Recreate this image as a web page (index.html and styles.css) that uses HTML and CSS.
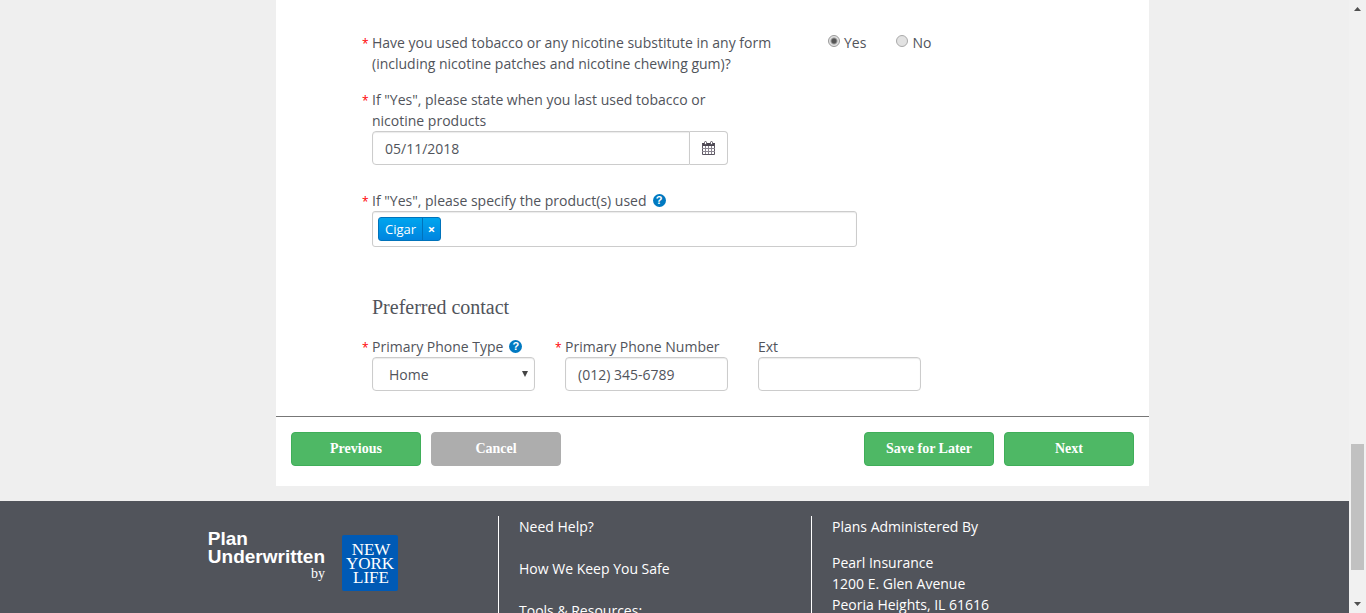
FILE: index.html
```html
<!DOCTYPE html>
<html lang="en">
<head>
<meta charset="utf-8">
<title>Application</title>
<link rel="stylesheet" href="styles.css">
</head>
<body>
<div class="viewport">
  <div class="page">
    <div class="columns">
      <main class="panel">
        <form>
          <div class="fields">
            <div class="question" role="radiogroup" aria-labelledby="tobacco-label">
              <div class="label question-text" id="tobacco-label"><span class="req">*</span>Have you used tobacco or any nicotine substitute in any form (including nicotine patches and nicotine chewing gum)?</div>
              <div class="radios">
                <label class="radio"><input type="radio" name="tobacco" checked>Yes</label>
                <label class="radio"><input type="radio" name="tobacco">No</label>
              </div>
            </div>

            <div class="field field-date">
              <label class="label" for="last-used"><span class="req">*</span>If "Yes", please state when you last used tobacco or nicotine products</label>
              <div class="input-group">
                <input class="control" id="last-used" type="text" value="05/11/2018">
                <button class="calendar" type="button" aria-label="Choose date">
                  <svg width="13" height="14" viewBox="0 0 13 14" fill="none" stroke="#5a5560">
                    <path d="M0 2h13v3H0z" fill="#4a4550" stroke="none"/>
                    <path d="M.5 2.500v11h12v-11"/>
                    <path d="M0 7.500h13M0 10.500h13M3.500 5v8M6.500 5v8M9.500 5v8" stroke="#8a8590"/>
                    <rect x="2.500" y=".5" width="2" height="3" rx="1" fill="#fff"/>
                    <rect x="8.500" y=".5" width="2" height="3" rx="1" fill="#fff"/>
                  </svg>
                </button>
              </div>
            </div>

            <div class="field field-products">
              <div class="label-row">
                <label class="label" for="products"><span class="req">*</span>If "Yes", please specify the product(s) used</label>
                <button class="help" type="button" aria-label="Help">?</button>
              </div>
              <div class="tokens">
                <span class="token"><span class="token-text">Cigar</span><button class="token-remove" type="button" aria-label="Remove Cigar">×</button></span>
                <input class="token-input" id="products" type="text">
              </div>
            </div>

            <h2 class="heading">Preferred contact</h2>

            <div class="contact">
              <div class="field">
                <div class="label-row">
                  <label class="label" for="phone-type"><span class="req">*</span>Primary Phone Type</label>
                  <button class="help" type="button" aria-label="Help">?</button>
                </div>
                <div class="select-wrap">
                  <select class="control select" id="phone-type"><option>Home</option></select>
                  <svg class="caret" width="6" height="6" viewBox="0 0 6 6"><path d="M0 0h6L3 6z" fill="#444"/></svg>
                </div>
              </div>
              <div class="field">
                <label class="label" for="phone"><span class="req">*</span>Primary Phone Number</label>
                <input class="control" id="phone" type="text" value="(012) 345-6789">
              </div>
              <div class="field">
                <label class="label" for="ext">Ext</label>
                <input class="control" id="ext" type="text">
              </div>
            </div>
          </div>

          <div class="actions">
            <button class="btn" type="button">Previous</button>
            <button class="btn btn-muted" type="button">Cancel</button>
            <span class="spacer"></span>
            <button class="btn" type="button">Save for Later</button>
            <button class="btn" type="submit">Next</button>
          </div>
        </form>
      </main>
    </div>

    <footer class="footer">
      <div class="brand">
        <div class="brand-text"><strong>Plan<br>Underwritten</strong><span class="by">by</span></div>
        <svg class="brand-logo" width="56" height="56" viewBox="0 0 56 56" role="img" aria-label="New York Life">
          <rect width="56" height="56" rx="2" fill="#005ab5"/>
          <g class="brand-name" text-anchor="middle">
            <text x="29" y="20">NEW</text>
            <text x="28" y="34">YORK</text>
            <text x="29" y="48">LIFE</text>
          </g>
        </svg>
      </div>
      <nav class="links">
        <a href="#help">Need Help?</a>
        <a href="#safe">How We Keep You Safe</a>
        <span>Tools &amp; Resources:</span>
      </nav>
      <div class="admin">
        <p>Plans Administered By</p>
        <address>Pearl Insurance<br>1200 E. Glen Avenue<br>Peoria Heights, IL 61616</address>
      </div>
    </footer>
  </div>

  <div class="scrollbar" aria-hidden="true">
    <svg width="7" height="4" viewBox="0 0 7 4"><path d="M0 4h7L3.500 0z" fill="#505050"/></svg>
    <div class="track"><div class="thumb"></div></div>
    <svg width="7" height="4" viewBox="0 0 7 4"><path d="M0 0h7L3.500 4z" fill="#505050"/></svg>
  </div>
</div>
</body>
</html>
```
FILE: styles.css
```css
* { box-sizing: border-box; }

body {
  margin: 0;
  background: #efefef;
  color: #51545b;
  font: 14px/21px "Open Sans", "Noto Sans", sans-serif;
}

button, input, select { font: inherit; color: inherit; }
p, h2 { margin: 0; }

.viewport {
  display: flex;
  height: 100vh;
  overflow: hidden;
}

.page {
  flex: 1;
  display: flex;
  flex-direction: column;
  min-width: 0;
}

.columns {
  display: grid;
  grid-template-columns: 276fr 873fr 200fr;
  padding-bottom: 15px;
}

.panel { grid-column: 2; background: #fff; }

.fields { padding: 32px 96px 25px; }

.question { display: flex; gap: 42px; }
.question-text { width: 414px; }

.label { display: block; }

.req {
  display: inline-block;
  width: 10px;
  margin-left: -10px;
  color: #f00;
  font-size: 12px;
  line-height: 12px;
}

.radios { display: flex; gap: 30px; }
.radio { display: flex; gap: 4px; }
.radio input {
  appearance: none;
  width: 12px;
  height: 12px;
  margin: 3px 0 0;
  border: 1px solid #aaa;
  border-radius: 50%;
  background: #e2e2e2;
}
.radio input:checked {
  border-color: #999;
  background: radial-gradient(circle, #555 2px, #e2e2e2 4px);
}

.field-date { width: 356px; margin-top: 15px; }
.field-products { width: 485px; margin-top: 25px; }

.control {
  display: block;
  width: 100%;
  height: 34px;
  padding: 0 12px;
  border: 1px solid #ccc;
  border-radius: 4px;
  background: #fff;
  box-shadow: inset 0 1px 1px rgba(0, 0, 0, .08);
}

.input-group { display: flex; }
.input-group .control { flex: 1; min-width: 0; border-radius: 4px 0 0 4px; }

.calendar {
  display: flex;
  align-items: center;
  justify-content: center;
  width: 38px;
  padding: 0;
  border: 1px solid #ccc;
  border-left: 0;
  border-radius: 0 4px 4px 0;
  background: #fff;
}

.label-row { display: flex; align-items: center; gap: 6px; }

.help {
  width: 13px;
  height: 13px;
  padding: 0;
  border: 0;
  border-radius: 50%;
  background: #0079c1;
  color: #fff;
  font: bold 11px/13px "Liberation Sans", sans-serif;
}

.tokens {
  display: flex;
  height: 36px;
  padding: 5px;
  border: 1px solid #ccc;
  border-radius: 3px;
  box-shadow: inset 0 1px 1px rgba(0, 0, 0, .08);
}
.token {
  display: flex;
  border: 1px solid #0073bb;
  border-radius: 3px;
  background: linear-gradient(#00a5ee, #0084df);
  color: #fff;
  font-size: 13px;
  line-height: 22px;
}
.token-text { padding: 0 6px; }
.token-remove {
  width: 18px;
  padding: 0;
  border: 0;
  border-left: 1px solid #0073bb;
  background: none;
  color: #fff;
  font-weight: bold;
}
.token-input { flex: 1; min-width: 0; border: 0; outline: 0; background: none; }

.heading {
  margin: 49px 0 18px;
  font: 20px/22px "Liberation Serif", serif;
}

.contact {
  display: grid;
  grid-template-columns: repeat(3, 163px);
  gap: 30px;
}

.select-wrap { position: relative; }
.select { appearance: none; padding: 0 16px; }
.caret { position: absolute; right: 7px; top: 14px; pointer-events: none; }

.actions {
  display: flex;
  gap: 10px;
  padding: 15px 15px 20px;
  border-top: 1px solid #777;
}
.spacer { flex: 1; }

.btn {
  width: 130px;
  height: 34px;
  padding: 0;
  border: 1px solid #3fae59;
  border-radius: 4px;
  background: #4eb865;
  color: #fff;
  font: bold 14px/20px "Liberation Serif", serif;
}
.btn-muted { border-color: #adadad; background: #adadad; }

.footer {
  flex: 1 0 auto;
  display: grid;
  grid-template-columns: 498fr 313fr 538fr;
  padding-top: 15px;
  background: #51545b;
  color: #fff;
}

.brand {
  display: flex;
  justify-content: flex-end;
  align-items: flex-start;
  gap: 17px;
  padding: 14px 100px 0 0;
}
.brand-text {
  display: flex;
  flex-direction: column;
  font: 19px/18px "Liberation Sans", sans-serif;
}
.by {
  align-self: flex-end;
  font: 14px/16px "Liberation Serif", serif;
}
.brand-logo { margin-top: 5px; }
.brand-name { fill: #fff; font: 17px "Liberation Serif", serif; }

.links, .admin {
  padding-left: 20px;
  border-left: 1px solid #fff;
}
.links { display: flex; flex-direction: column; gap: 21px; }
.links a { color: inherit; text-decoration: none; }
.admin p { margin-bottom: 15px; }
.admin address { font-style: normal; }

.scrollbar {
  display: flex;
  flex-direction: column;
  align-items: center;
  width: 17px;
  padding: 7px 0;
  background: #f1f1f1;
}
.track {
  flex: 1;
  display: grid;
  grid-template-rows: 433fr 126fr 32fr;
  width: 13px;
}
.thumb { grid-row: 2; background: #c1c1c1; }
```
